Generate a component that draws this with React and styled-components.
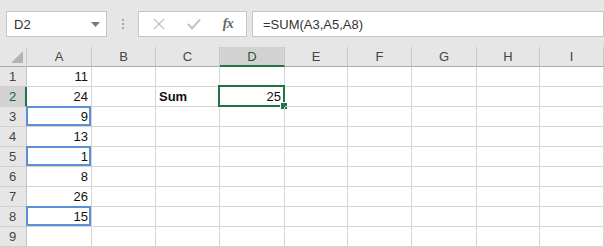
import React from 'react';
import styled, { createGlobalStyle, css } from 'styled-components';

const GlobalStyle = createGlobalStyle`
  html, body {
    margin: 0;
    padding: 0;
    background: #ffffff;
  }
  body {
    font-family: 'Liberation Sans', Arial, sans-serif;
  }
`;

const GREEN = '#217346';
const BLUE = '#5b8fd6';
const GRID = '#d4d4d4';

const Window = styled.div`
  width: 604px;
  height: 247px;
  overflow: hidden;
  background: #ffffff;
`;

const Toolbar = styled.div`
  height: 47px;
  box-sizing: border-box;
  padding: 11px 0 0 6px;
  background: #e6e6e6;
  display: flex;
  align-items: flex-start;
`;

const NameBox = styled.div`
  width: 101px;
  height: 26px;
  box-sizing: border-box;
  border: 1px solid #c6c6c6;
  background: #ffffff;
  display: flex;
  align-items: center;
  justify-content: space-between;
  padding: 0 6px 0 7px;
  font-size: 13px;
  color: #333;
`;

const Grip = styled.div`
  width: 31px;
  height: 26px;
  display: flex;
  flex-direction: column;
  align-items: center;
  justify-content: center;
  gap: 2px;

  span {
    width: 2px;
    height: 2px;
    background: #a8a8a8;
  }
`;

const FxGroup = styled.div`
  width: 109px;
  height: 26px;
  box-sizing: border-box;
  border: 1px solid #c6c6c6;
  background: #ffffff;
  display: flex;
  align-items: center;
  padding-left: 12px;
`;

const FxButton = styled.div`
  width: ${(props) => props.w}px;
  display: flex;
  align-items: center;
  justify-content: center;
  height: 24px;
`;

const FxLabel = styled.span`
  font-family: 'Liberation Serif', 'Times New Roman', serif;
  font-style: italic;
  font-weight: bold;
  font-size: 14px;
  color: #666;
  letter-spacing: -0.5px;
`;

const Formula = styled.div`
  flex: 1;
  height: 26px;
  margin-left: 5px;
  box-sizing: border-box;
  border: 1px solid #c6c6c6;
  border-right-color: #c6c6c6;
  background: #ffffff;
  display: flex;
  align-items: center;
  padding-left: 10px;
  font-size: 13px;
  color: #333;
`;

const Sheet = styled.div`
  display: grid;
  grid-template-columns: 27px 65px 64px 64px 65px 63px 64px 65px 63px 64px;
  grid-auto-rows: 20px;
`;

const headerBase = css`
  box-sizing: border-box;
  background: ${(props) => (props.active ? '#d2d2d2' : '#e6e6e6')};
  color: ${(props) => (props.active ? '#1f5a38' : '#444')};
  font-size: 13px;
  display: flex;
  align-items: center;
  justify-content: center;
`;

const Corner = styled.div`
  ${headerBase};
  border-right: 1px solid #c8c8c8;
  border-bottom: 1px solid #ababab;
  position: relative;
`;

const ColHeader = styled.div`
  ${headerBase};
  border-right: 1px solid #c8c8c8;
  border-bottom: ${(props) => (props.active ? `2px solid ${GREEN}` : '1px solid #ababab')};
`;

const RowHeader = styled.div`
  ${headerBase};
  border-bottom: 1px solid #cfcfcf;
  border-right: ${(props) => (props.active ? `2px solid ${GREEN}` : '1px solid #c2c2c2')};
  padding-right: ${(props) => (props.active ? '0' : '1px')};
`;

const Cell = styled.div`
  position: relative;
  box-sizing: border-box;
  border-right: 1px solid ${GRID};
  border-bottom: 1px solid ${GRID};
  font-size: 13px;
  line-height: 19px;
  color: #111;
  padding: 0 3px;
  text-align: ${(props) => (props.numeric ? 'right' : 'left')};
  font-weight: ${(props) => (props.bold ? 'bold' : 'normal')};
  white-space: nowrap;
`;

const Mark = styled.div`
  position: absolute;
  pointer-events: none;
  box-sizing: border-box;
  ${(props) => (props.kind === 'active'
    ? css`
      top: -2px;
      left: -2px;
      right: -1px;
      bottom: -1px;
      border: 2px solid ${GREEN};
    `
    : css`
      top: -1px;
      left: -1px;
      right: 0;
      bottom: 0;
      border: 2px solid ${BLUE};
    `)}
`;

const Handle = styled.div`
  position: absolute;
  right: -5px;
  bottom: -5px;
  width: 6px;
  height: 6px;
  background: ${GREEN};
  border: 1px solid #ffffff;
`;

const columns = ['A', 'B', 'C', 'D', 'E', 'F', 'G', 'H', 'I'];

const values = {
  A1: 11, A2: 24, A3: 9, A4: 13, A5: 1, A6: 8, A7: 26, A8: 15,
  C2: 'Sum', D2: 25,
};

const referenced = ['A3', 'A5', 'A8'];
const activeCell = 'D2';

const DropArrow = () => (
  <svg width="9" height="5" viewBox="0 0 9 5">
    <path d="M0 0 L9 0 L4.5 5 Z" fill="#7a7a7a" />
  </svg>
);

const CancelIcon = () => (
  <svg width="12" height="12" viewBox="0 0 12 12">
    <path d="M1 1 L11 11 M11 1 L1 11" stroke="#c4c4c4" strokeWidth="1.4" fill="none" />
  </svg>
);

const EnterIcon = () => (
  <svg width="14" height="12" viewBox="0 0 14 12">
    <path d="M1 6 L5 10.5 L13 1.5" stroke="#c4c4c4" strokeWidth="2" fill="none" />
  </svg>
);

const CornerTriangle = () => (
  <svg width="12" height="12" viewBox="0 0 12 12" style={{ position: 'absolute', right: 3, bottom: 3 }}>
    <path d="M12 0 L12 12 L0 12 Z" fill="#b4b4b4" />
  </svg>
);

export default function App() {
  const rows = [1, 2, 3, 4, 5, 6, 7, 8, 9];
  return (
    <Window>
      <GlobalStyle />
      <Toolbar>
        <NameBox>
          <span>D2</span>
          <DropArrow />
        </NameBox>
        <Grip>
          <span />
          <span />
          <span />
        </Grip>
        <FxGroup>
          <FxButton w={16}><CancelIcon /></FxButton>
          <FxButton w={54}><EnterIcon /></FxButton>
          <FxButton w={14}><FxLabel>fx</FxLabel></FxButton>
        </FxGroup>
        <Formula>=SUM(A3,A5,A8)</Formula>
      </Toolbar>
      <Sheet>
        <Corner><CornerTriangle /></Corner>
        {columns.map((col) => (
          <ColHeader key={col} active={col === 'D'}>{col}</ColHeader>
        ))}
        {rows.map((r) => (
          <React.Fragment key={r}>
            <RowHeader active={r === 2}>{r}</RowHeader>
            {columns.map((col) => {
              const id = `${col}${r}`;
              const v = values[id];
              return (
                <Cell key={id} numeric={typeof v === 'number'} bold={v === 'Sum'}>
                  {v}
                  {referenced.includes(id) && <Mark kind="ref" />}
                  {id === activeCell && (
                    <Mark kind="active">
                      <Handle />
                    </Mark>
                  )}
                </Cell>
              );
            })}
          </React.Fragment>
        ))}
      </Sheet>
    </Window>
  );
}
